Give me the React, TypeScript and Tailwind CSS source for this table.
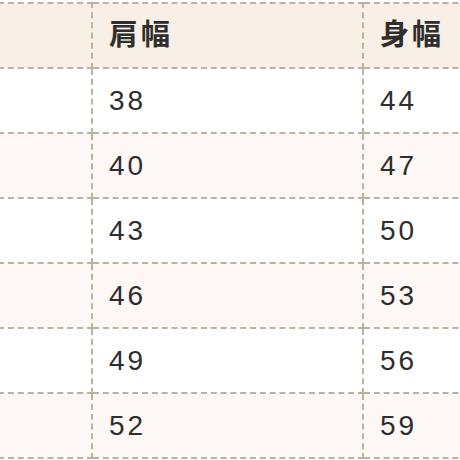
import React from 'react'

const rows = [
  { shoulder: '38', body: '44' },
  { shoulder: '40', body: '47' },
  { shoulder: '43', body: '50' },
  { shoulder: '46', body: '53' },
  { shoulder: '49', body: '56' },
  { shoulder: '52', body: '59' },
]

// left column is cut off by the viewport, only its right edge shows
const cell =
  'border-2 border-dashed border-[#bab2a2] w-[271px] min-w-[271px] h-[65px] px-4 text-left align-middle'

export default function App() {
  return (
    <div className="w-[460px] h-[460px] overflow-hidden bg-white">
      <table
        className="border-collapse mt-[2px] -ml-[180px] text-[#2e2e2e] tracking-[3px]"
        style={{ fontFamily: '"Liberation Sans", "Noto Sans CJK JP", sans-serif' }}
      >
        <thead>
          <tr className="bg-[#f8efe6]">
            <th className={cell}></th>
            <th className={`${cell} text-[29px] font-bold`}>肩幅</th>
            <th className={`${cell} text-[29px] font-bold`}>身幅</th>
          </tr>
        </thead>
        <tbody>
          {rows.map((r, i) => (
            <tr key={r.shoulder} className={i % 2 === 1 ? 'bg-[#fdf8f6]' : 'bg-white'}>
              <td className={cell}></td>
              <td className={`${cell} text-[28px]`}>{r.shoulder}</td>
              <td className={`${cell} text-[28px]`}>{r.body}</td>
            </tr>
          ))}
        </tbody>
      </table>
    </div>
  )
}
